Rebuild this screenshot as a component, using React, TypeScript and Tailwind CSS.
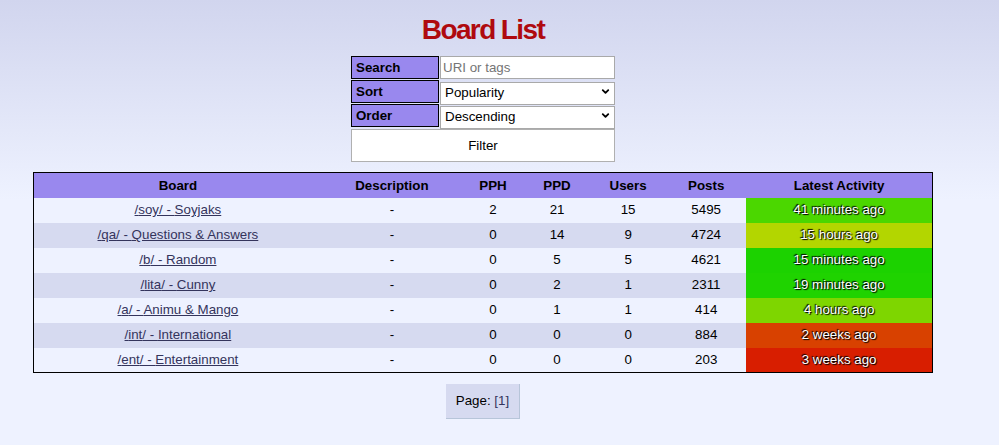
import { ChevronDown } from 'lucide-react'

interface Board {
  uri: string;
  title: string;
  pph: number;
  ppd: number;
  users: number;
  posts: number;
  activity: string;
  color: string;
}

const boards: Board[] = [
  { uri: 'soy', title: 'Soyjaks', pph: 2, ppd: 21, users: 15, posts: 5495, activity: '41 minutes ago', color: 'bg-[#4bd700]' },
  { uri: 'qa', title: 'Questions & Answers', pph: 0, ppd: 14, users: 9, posts: 4724, activity: '15 hours ago', color: 'bg-[#b3d600]' },
  { uri: 'b', title: 'Random', pph: 0, ppd: 5, users: 5, posts: 4621, activity: '15 minutes ago', color: 'bg-[#1cd200]' },
  { uri: 'lita', title: 'Cunny', pph: 0, ppd: 2, users: 1, posts: 2311, activity: '19 minutes ago', color: 'bg-[#1fd300]' },
  { uri: 'a', title: 'Animu & Mango', pph: 0, ppd: 1, users: 1, posts: 414, activity: '4 hours ago', color: 'bg-[#7ed600]' },
  { uri: 'int', title: 'International', pph: 0, ppd: 0, users: 0, posts: 884, activity: '2 weeks ago', color: 'bg-[#d84100]' },
  { uri: 'ent', title: 'Entertainment', pph: 0, ppd: 0, users: 0, posts: 203, activity: '3 weeks ago', color: 'bg-[#d81e00]' },
]

function FilterLabel({ children }: { children: React.ReactNode }) {
  return (
    <div className="h-[23px] border border-black bg-[#9988ee] pl-[4px] flex items-center font-bold text-[13.33px] text-black">
      {children}
    </div>
  )
}

function FilterSelect({ options }: { options: string[] }) {
  return (
    <div className="relative h-[23px]">
      <select className="appearance-none w-full h-full border border-[#a9a9a9] bg-white pl-[4px] pb-[1px] text-[13.33px] text-black outline-none">
        {options.map((o) => (
          <option key={o}>{o}</option>
        ))}
      </select>
      <ChevronDown className="absolute right-[4px] top-[6px] h-[11px] w-[11px] text-black pointer-events-none" strokeWidth={4} />
    </div>
  )
}

export default function App() {
  return (
    <div className="min-h-screen bg-[#eef2ff] bg-[linear-gradient(#d1d5ee,#eef2ff_200px)] font-['Liberation_Sans',Arial,sans-serif] text-black">
      <div className="w-[966px] flex flex-col items-center">
        <h1 className="pt-[14px] leading-[32px] text-[28px] font-bold tracking-[-1.6px] text-[#af0a0f]">
          Board List
        </h1>

        <div className="mt-[10px] w-[264px] grid grid-cols-[88px_175px] gap-x-[1px] gap-y-[1px]">
          <FilterLabel>Search</FilterLabel>
          <input
            placeholder="URI or tags"
            className="h-[23px] border border-[#a9a9a9] bg-white pl-[2px] text-[13.33px] text-black placeholder:text-[#757575] outline-none"
          />
          <FilterLabel>Sort</FilterLabel>
          <FilterSelect options={['Popularity', 'Latest Activity', 'Alphabetical']} />
          <FilterLabel>Order</FilterLabel>
          <FilterSelect options={['Descending', 'Ascending']} />
          <button className="col-span-2 mt-[1px] h-[33px] border border-[#b0b0b0] bg-white text-[13.33px] text-black">
            Filter
          </button>
        </div>

        <table className="mt-[10px] w-[900px] table-fixed border-collapse border border-black text-[13.33px]">
          <colgroup>
            <col className="w-[288px]" />
            <col className="w-[140px]" />
            <col className="w-[62px]" />
            <col className="w-[66px]" />
            <col className="w-[76px]" />
            <col className="w-[80px]" />
            <col className="w-[186px]" />
          </colgroup>
          <thead>
            <tr className="h-[25px] bg-[#9988ee]">
              <th className="pt-[2px] font-bold">Board</th>
              <th className="pt-[2px] font-bold">Description</th>
              <th className="pt-[2px] font-bold">PPH</th>
              <th className="pt-[2px] font-bold">PPD</th>
              <th className="pt-[2px] font-bold">Users</th>
              <th className="pt-[2px] font-bold">Posts</th>
              <th className="pt-[2px] font-bold">Latest Activity</th>
            </tr>
          </thead>
          <tbody>
            {boards.map((b, i) => (
              <tr key={b.uri} className={`h-[25px] text-center ${i % 2 === 0 ? 'bg-[#eef2ff]' : 'bg-[#d6daf0]'}`}>
                <td>
                  <a href={`/${b.uri}/`} className="text-[#34345c] underline">
                    /{b.uri}/ - {b.title}
                  </a>
                </td>
                <td>-</td>
                <td>{b.pph}</td>
                <td>{b.ppd}</td>
                <td>{b.users}</td>
                <td>{b.posts}</td>
                <td className={`${b.color} text-white [text-shadow:1px_1px_1px_#000,-1px_-1px_1px_#000]`}>
                  {b.activity}
                </td>
              </tr>
            ))}
          </tbody>
        </table>

        <div className="mt-[11px] h-[35px] px-[10px] flex items-center bg-[#d6daf0] border-r border-b border-[#b7c5d9] text-[13.33px]">
          Page:&nbsp;<span className="text-[#34345c]">[1]</span>
        </div>
      </div>
    </div>
  )
}
